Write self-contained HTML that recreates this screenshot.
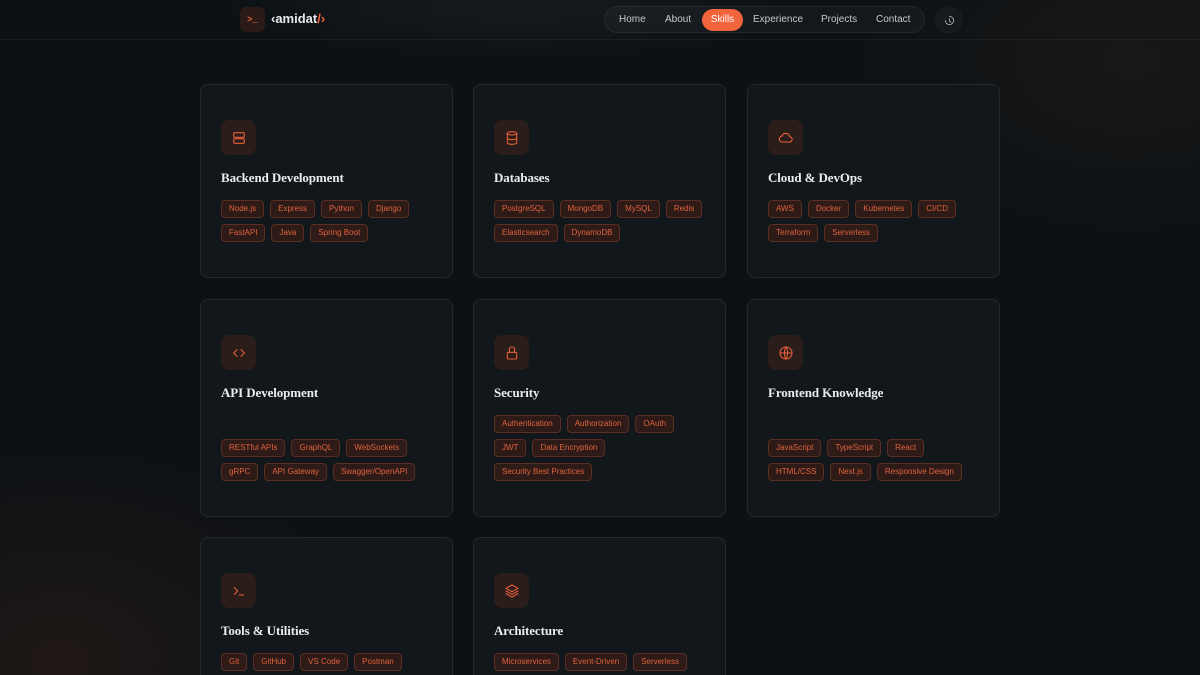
<!DOCTYPE html>
<html><head><meta charset="utf-8"><style>
*{margin:0;padding:0;box-sizing:border-box}
html,body{width:1200px;height:675px;overflow:hidden}
body{background:#0c1115;font-family:"Liberation Sans",sans-serif;position:relative}
.bg{position:absolute;left:0;top:0;width:1200px;height:675px;background:radial-gradient(ellipse 320px 220px at 60px 660px,rgba(80,40,22,.28),rgba(80,40,22,0)),radial-gradient(ellipse 280px 180px at 1130px 60px,rgba(60,42,32,.25),rgba(60,42,32,0)),radial-gradient(ellipse 300px 50px at 520px 8px,rgba(70,70,70,.18),rgba(70,70,70,0))}
header{position:absolute;left:0;top:0;width:1200px;height:40px;border-bottom:1px solid rgba(255,255,255,.05)}
.logo{position:absolute;left:240px;top:7px;width:25px;height:25px;border-radius:6px;background:#2a1b17;color:#e8603c;font:bold 9px "Liberation Mono",monospace;display:flex;align-items:center;justify-content:center}
.brand{position:absolute;left:271px;top:11px;color:#e8e8e8;font-size:13px;font-weight:bold}
.brand b{color:#f0643c}
nav{position:absolute;left:604px;top:6px;width:321px;height:27px;border-radius:14px;background:rgba(255,255,255,.03);border:1px solid rgba(255,255,255,.06)}
nav span{position:absolute;top:3px;color:#c8c8c8;font-size:10px;line-height:20px}
nav span.a{background:#f2643c;color:#fff;border-radius:11px;width:41px;text-align:center;top:2px;line-height:22px}
.theme{position:absolute;left:935px;top:6px;width:28px;height:28px;border-radius:14px;background:rgba(255,255,255,.03);display:flex;align-items:center;justify-content:center}
.card{position:absolute;width:253px;border-radius:8px;background:#11171b;border:1px solid rgba(255,255,255,.08);padding:35px 20px 35px 20px;display:flex;flex-direction:column}
.ic{width:35px;height:35px;border-radius:8px;background:#2a1d1a;display:flex;align-items:center;justify-content:center}
h3{font-family:"Liberation Serif",serif;color:#ececec;font-weight:bold;font-size:13px;margin-top:15px;letter-spacing:-.1px}
.tags{margin-top:auto;display:flex;flex-wrap:wrap;gap:6px 6px;padding-top:14px}
.tags span{font-size:8px;color:#e0633f;background:#2e1a16;border:1px solid #5a2e23;border-radius:4px;height:18px;line-height:16px;padding:0 7px}
svg{width:16px;height:16px;fill:none;stroke:#e8603c;stroke-width:1.6;stroke-linecap:round;stroke-linejoin:round}
</style></head><body><div class="bg"></div>
<header><div class="logo">&gt;_</div><div class="brand">‹amidat<b>/›</b></div>
<nav><span style="left:14px">Home</span><span style="left:60px">About</span><span class="a" style="left:97px">Skills</span><span style="left:148px">Experience</span><span style="left:216px">Projects</span><span style="left:271px">Contact</span></nav>
<div class="theme"><svg style="stroke:#ccc;width:11px;height:11px" viewBox="0 0 24 24"><path d="M12 3a9 9 0 1 1-9 9"/><path d="M12 8v5l3 3"/></svg></div></header>

<div class="card" style="left:200px;top:84px;height:194px"><div class="ic"><svg viewBox="0 0 24 24"><rect x="4" y="4" width="16" height="7" rx="2"/><rect x="4" y="13" width="16" height="7" rx="2"/></svg></div><h3>Backend Development</h3><div class="tags"><span>Node.js</span><span>Express</span><span>Python</span><span>Django</span><span>FastAPI</span><span>Java</span><span>Spring Boot</span></div></div>
<div class="card" style="left:473px;top:84px;height:194px"><div class="ic"><svg viewBox="0 0 24 24"><ellipse cx="12" cy="5" rx="7" ry="2.5"/><path d="M5 5v14c0 1.4 3 2.5 7 2.5s7-1.1 7-2.5V5M5 12c0 1.4 3 2.5 7 2.5s7-1.1 7-2.5"/></svg></div><h3>Databases</h3><div class="tags"><span>PostgreSQL</span><span>MongoDB</span><span>MySQL</span><span>Redis</span><span>Elasticsearch</span><span>DynamoDB</span></div></div>
<div class="card" style="left:747px;top:84px;height:194px"><div class="ic"><svg viewBox="0 0 24 24"><path d="M7 18h10a4 4 0 0 0 .5-8A6 6 0 0 0 6 9a4.5 4.5 0 0 0 1 9z"/></svg></div><h3>Cloud &amp; DevOps</h3><div class="tags"><span>AWS</span><span>Docker</span><span>Kubernetes</span><span>CI/CD</span><span>Terraform</span><span>Serverless</span></div></div>

<div class="card" style="left:200px;top:299px;height:218px"><div class="ic"><svg viewBox="0 0 24 24"><path d="M9 7l-5 5 5 5M15 7l5 5-5 5"/></svg></div><h3>API Development</h3><div class="tags"><span>RESTful APIs</span><span>GraphQL</span><span>WebSockets</span><span>gRPC</span><span>API Gateway</span><span>Swagger/OpenAPI</span></div></div>
<div class="card" style="left:473px;top:299px;height:218px"><div class="ic"><svg viewBox="0 0 24 24"><rect x="5" y="11" width="14" height="10" rx="2"/><path d="M8 11V7a4 4 0 0 1 8 0v4"/></svg></div><h3>Security</h3><div class="tags"><span>Authentication</span><span>Authorization</span><span>OAuth</span><span>JWT</span><span>Data Encryption</span><span>Security Best Practices</span></div></div>
<div class="card" style="left:747px;top:299px;height:218px"><div class="ic"><svg viewBox="0 0 24 24"><circle cx="12" cy="12" r="9"/><path d="M3 12h18M12 3c3 3 3 15 0 18M12 3c-3 3-3 15 0 18"/></svg></div><h3>Frontend Knowledge</h3><div class="tags"><span>JavaScript</span><span>TypeScript</span><span>React</span><span>HTML/CSS</span><span>Next.js</span><span>Responsive Design</span></div></div>

<div class="card" style="left:200px;top:537px;height:150px;padding-bottom:0"><div class="ic"><svg viewBox="0 0 24 24"><path d="M5 7l5 5-5 5M12 18h7"/></svg></div><h3>Tools &amp; Utilities</h3><div class="tags" style="margin-top:0"><span>Git</span><span>GitHub</span><span>VS Code</span><span>Postman</span></div></div>
<div class="card" style="left:473px;top:537px;height:150px;padding-bottom:0"><div class="ic"><svg viewBox="0 0 24 24"><path d="M12 3l9 5-9 5-9-5z"/><path d="M3 12l9 5 9-5M3 16l9 5 9-5"/></svg></div><h3>Architecture</h3><div class="tags" style="margin-top:0"><span>Microservices</span><span>Event-Driven</span><span>Serverless</span></div></div>
</body></html>
